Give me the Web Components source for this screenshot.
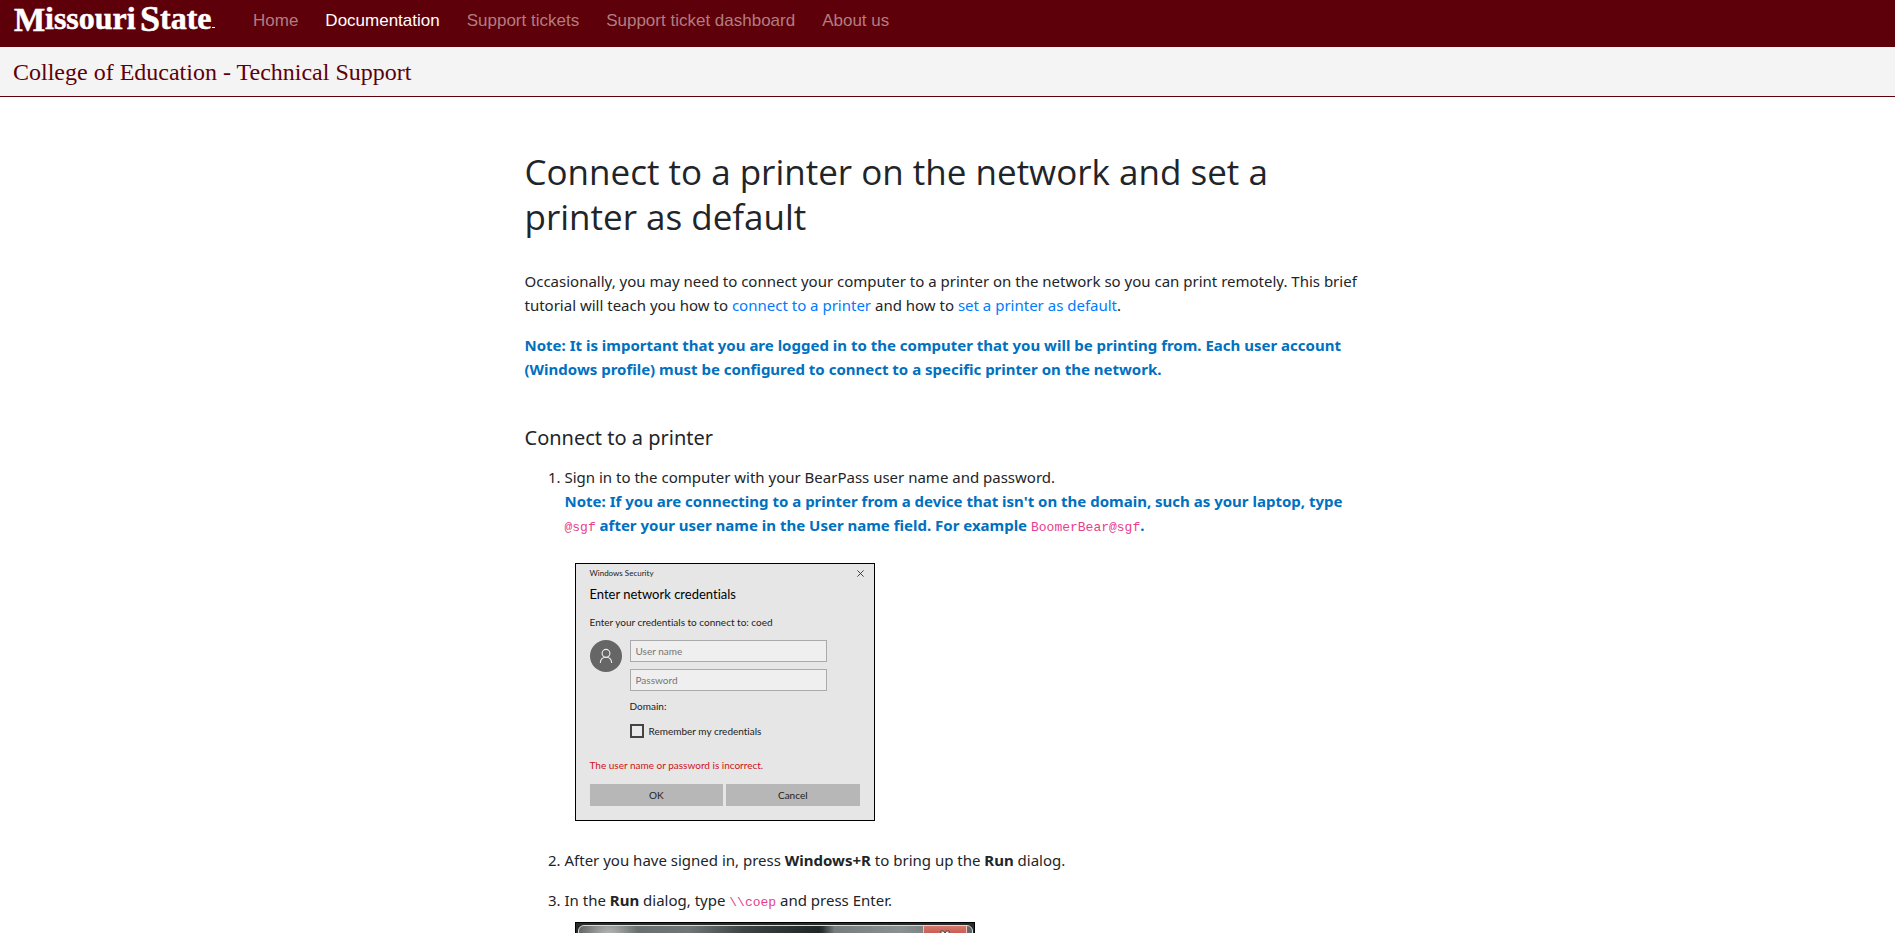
<!DOCTYPE html>
<html lang="en">
<head>
<meta charset="utf-8">
<meta name="viewport" content="width=device-width, initial-scale=1">
<title>Connect to a printer - College of Education Technical Support</title>
<style>
  body { margin: 0; background: #fff; color: #212529; font: 15px/24px "Noto Sans", "Open Sans", sans-serif; }
</style>
</head>
<body>
<site-header>
  <nav-link href="#home">Home</nav-link>
  <nav-link href="#documentation" current>Documentation</nav-link>
  <nav-link href="#tickets">Support tickets</nav-link>
  <nav-link href="#dashboard">Support ticket dashboard</nav-link>
  <nav-link href="#about">About us</nav-link>
</site-header>
<site-title>College of Education - Technical Support</site-title>
<printer-guide></printer-guide>

<template id="site-header">
  <style>
    :host { display: block; background: #5e0009; }
    header { display: flex; align-items: flex-start; min-height: 47px; gap: 38px; padding-left: 13px; box-sizing: border-box; }
    svg { display: block; fill: #fff; stroke: #fff; stroke-width: .5px; overflow: visible; }
    nav { display: flex; flex-wrap: wrap; gap: 27px; padding-top: 9px; }
  </style>
  <header>
    <a href="#home" aria-label="Missouri State">
      <svg width="202" height="44" viewBox="0 0 202 44" font-family="Liberation Serif, serif" font-weight="bold" font-size="32">
        <text x="1" y="31" font-size="33">M</text>
        <text x="32" y="29">issouri</text>
        <text x="127" y="31" font-size="36">S</text>
        <text x="147" y="29">tate</text>
        <rect x="199" y="27" width="3" height="1" stroke="none"/>
      </svg>
    </a>
    <nav aria-label="Main"><slot></slot></nav>
  </header>
</template>

<template id="nav-link">
  <style>
    :host { display: block; font: 17px/24px "Liberation Sans", Arial, sans-serif; }
    a { color: #b17d81; text-decoration: none; }
    :host([current]) a { color: #fff; }
  </style>
  <a><slot></slot></a>
</template>

<template id="site-title">
  <style>
    :host { display: block; padding: 10px 13px 8px; background: #f4f4f4; border-bottom: 1px solid #5e0009; color: #5e0009; font: 24px/31px "Liberation Serif", Georgia, serif; }
  </style>
  <slot></slot>
</template>

<template id="note-text"><style>:host { color: #0070c0; font-weight: bold; }</style><slot></slot></template>

<template id="key-text"><style>code { color: #e83e8c; font: normal 13px "Liberation Mono", monospace; }</style><code><slot></slot></code></template>

<template id="printer-guide">
  <style>
    :host { display: block; padding: 52px 16px 16px; }
    main { max-width: 846px; margin: 0 auto; }
    h1 { margin: 0 0 30px; font: 400 35px/45px "Open Sans", "Noto Sans", sans-serif; }
    p { margin: 0 0 16px; }
    h2 { margin: 41px 0 11px; font-size: 20px; line-height: 32px; font-weight: 400; }
    a { color: #007bff; text-decoration: none; }
    ol { margin: 0; padding-left: 40px; }
    li { margin-bottom: 16px; }
    credential-dialog { margin: 26px 10px 27px; }
    run-dialog { margin: 10px 10px 0; }
  </style>
  <main>
    <h1>Connect to a printer on the network and set a printer as default</h1>
    <p>Occasionally, you may need to connect your computer to a printer on the network so you can print remotely. This brief tutorial will teach you how to <a href="#connect">connect to a printer</a> and how to <a href="#default">set a printer as default</a>.</p>
    <p><note-text>Note: It is important that you are logged in to the computer that you will be printing from. Each user account (Windows profile) must be configured to connect to a specific printer on the network.</note-text></p>
    <h2 id="connect">Connect to a printer</h2>
    <ol>
      <li>Sign in to the computer with your BearPass user name and password.<br>
        <note-text>Note: If you are connecting to a printer from a device that isn't on the domain, such as your laptop, type <key-text>@sgf</key-text> after your user name in the User name field. For example <key-text>BoomerBear@sgf</key-text>.</note-text>
        <credential-dialog></credential-dialog>
      </li>
      <li>After you have signed in, press <strong>Windows+R</strong> to bring up the <strong>Run</strong> dialog.</li>
      <li>In the <strong>Run</strong> dialog, type <key-text>\\coep</key-text> and press Enter.
        <run-dialog></run-dialog>
      </li>
    </ol>
  </main>
</template>

<template id="credential-dialog">
  <style>
    :host { display: block; box-sizing: border-box; width: 300px; max-width: 100%; padding: 2px 14px 14px; border: 1px solid #000; background: #e6e6e6; color: #222; font: 10px/16px Lato, "Noto Sans", sans-serif; font-variant-ligatures: none; }
    button, input { font: inherit; color: inherit; box-sizing: border-box; border-radius: 0; margin: 0; }
    .bar { display: flex; justify-content: space-between; align-items: center; margin-right: -4px; font-size: 8px; line-height: 14px; }
    .close { display: block; width: 7px; height: 7px; padding: 0; border: 0; background: none; }
    .close svg { display: block; }
    h3 { margin: 4px 0 10px; color: #000; font-size: 13px; line-height: 20px; font-weight: 400; }
    p { margin: 0; }
    .form { display: grid; grid-template-columns: 32px 197px; gap: 8px; margin-top: 10px; }
    .fields { display: grid; gap: 7px; }
    .text { width: 100%; height: 22px; padding: 0 5px; border: 1px solid #aaa; background: #efefef; }
    ::placeholder { color: #767676; opacity: 1; }
    label { display: flex; align-items: center; gap: 5px; margin-top: 2px; }
    .box { appearance: none; flex: none; width: 14px; height: 14px; border: 2px solid #444; background: #eaeaea; }
    .error { margin: 18px 0 11px; color: #d01217; }
    .actions { display: grid; grid-template-columns: 1fr 1fr; gap: 3px; }
    .actions button { height: 22px; padding: 0; border: 0; background: #b7b7b7; }
  </style>
  <div class="bar"><span>Windows Security</span>
    <button class="close" aria-label="Close"><svg width="7" height="7" viewBox="0 0 7 7" stroke="#333" stroke-width=".9"><path d="M.4.4l6.2 6.2M6.6.4L.4 6.6"/></svg></button>
  </div>
  <h3>Enter network credentials</h3>
  <p>Enter your credentials to connect to: coed</p>
  <div class="form">
    <svg width="32" height="32" viewBox="0 0 32 32" fill="none" stroke="#eee" stroke-width="1.1"><circle cx="16" cy="16" r="16" fill="#666" stroke="none"/><circle cx="16" cy="13.3" r="3.9"/><path d="M10.3 23c.2-3.600 2.500-5.800 5.700-5.800s5.500 2.200 5.700 5.800"/></svg>
    <div class="fields">
      <input class="text" type="text" placeholder="User name" aria-label="User name">
      <input class="text" type="password" placeholder="Password" aria-label="Password">
      <p>Domain:</p>
      <label><input class="box" type="checkbox">Remember my credentials</label>
    </div>
  </div>
  <p class="error">The user name or password is incorrect.</p>
  <div class="actions"><button>OK</button><button>Cancel</button></div>
</template>

<template id="run-dialog">
  <style>
    :host { display: block; box-sizing: border-box; width: 400px; max-width: 100%; padding: 2px 1px 1px 2px; border: 1px solid #000; background: #292a2a; }
    .bar { display: flex; justify-content: flex-end; height: 28px; padding-right: 5px; border: 1px solid #d8dada; border-radius: 6px 6px 0 0;
      background: radial-gradient(circle at 30px 12px, #bcc0bf, #bcc0bf00 30px), linear-gradient(90deg, #626867, #707675 28%, #3d4242 42%, #202626 61%, #2b3030 62%, #777d7c 65%, #8b9190 82%, #626867); }
    button { width: 44px; height: 18px; padding: 1px 0 0; border: 1px solid #edc2bb; border-top: 0; background: linear-gradient(#d5786c, #b63c30); }
    svg { display: block; margin: auto; }
  </style>
  <div class="bar"><button aria-label="Close"><svg width="12" height="11" viewBox="0 0 12 11"><path d="M2 1h2.500L6 3l1.500-2H10l.5 1-3 3.500 3 3.500-.5 1H7.500L6 8l-1.500 2H2l-.5-1 3-3.500-3-3.500z" fill="#eee" stroke="#444" stroke-width="1"/></svg></button></div>
</template>

<script>
  class TemplateElement extends HTMLElement {
    constructor() {
      super();
      this.attachShadow({ mode: "open" }).append(document.getElementById(this.localName).content.cloneNode(true));
    }
  }
  class NavLink extends TemplateElement {
    connectedCallback() {
      const link = this.shadowRoot.querySelector("a");
      link.href = this.getAttribute("href");
      if (this.hasAttribute("current")) link.setAttribute("aria-current", "page");
    }
  }
  customElements.define("nav-link", NavLink);
  for (const name of ["site-header", "site-title", "note-text", "key-text", "credential-dialog", "run-dialog", "printer-guide"])
    customElements.define(name, class extends TemplateElement {});
</script>
</body>
</html>
